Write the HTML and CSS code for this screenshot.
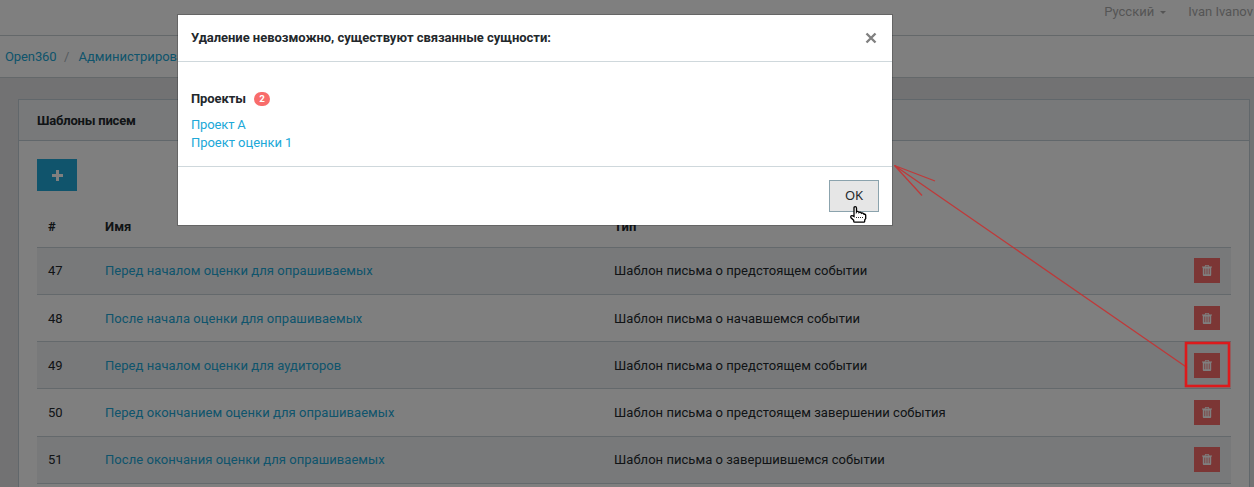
FILE: index.html
```html
<!DOCTYPE html>
<html lang="ru">
<head>
<meta charset="utf-8">
<title>Шаблоны писем</title>
<link rel="stylesheet" href="styles.css">
</head>
<body>
<svg class="defs" width="0" height="0">
  <symbol id="trash" viewBox="0 0 10 11"><path fill="currentColor" fill-rule="evenodd" d="M3.300 0h3.400l.7 1.400H10v1H9.200V10q0 1-1 1H1.800q-1 0-1-1V2.400H0v-1h2.600zM3.800.8l-.3.6h3l-.3-.6zM2.400 3.500v5.800h.8V3.500zM4.600 3.500v5.800h.8V3.500zM6.800 3.500v5.800h.8V3.500z"/></symbol>
</svg>
<header class="topbar"><span class="lang">Русский<i class="caret"></i></span><span>Ivan Ivanov</span></header>
<nav class="breadcrumb"><a>Open360</a><span class="sep">/</span><a class="section">Администрирование</a></nav>
<main class="main">
  <section class="card">
    <h1 class="card-header">Шаблоны писем</h1>
    <div class="card-body">
      <button class="btn-add"><svg width="11" height="11" viewBox="0 0 11 11"><path fill="currentColor" d="M4.500 0h2.500v4h4v3H7v4H4V7H0V4h4V0z"/></svg></button>
      <div class="table">
        <div class="row head"><span>#</span><span>Имя</span><span>Тип</span></div>
        <div class="row odd"><span>47</span><a>Перед началом оценки для опрашиваемых</a><span>Шаблон письма о предстоящем событии</span><button class="btn-del"><svg width="10" height="11"><use href="#trash"/></svg></button></div>
        <div class="row low"><span>48</span><a>После начала оценки для опрашиваемых</a><span>Шаблон письма о начавшемся событии</span><button class="btn-del short"><svg width="10" height="11"><use href="#trash"/></svg></button></div>
        <div class="row odd low"><span>49</span><a>Перед началом оценки для аудиторов</a><span>Шаблон письма о предстоящем событии</span><button class="btn-del"><svg width="10" height="11"><use href="#trash"/></svg></button></div>
        <div class="row low tall"><span>50</span><a>Перед окончанием оценки для опрашиваемых</a><span>Шаблон письма о предстоящем завершении события</span><button class="btn-del"><svg width="10" height="11"><use href="#trash"/></svg></button></div>
        <div class="row odd"><span>51</span><a>После окончания оценки для опрашиваемых</a><span>Шаблон письма о завершившемся событии</span><button class="btn-del"><svg width="10" height="11"><use href="#trash"/></svg></button></div>
        <div class="row last"></div>
      </div>
    </div>
  </section>
</main>
<div class="backdrop">
  <div class="modal">
    <div class="modal-header"><b>Удаление невозможно, существуют связанные сущности:</b><svg class="close" width="12" height="12" viewBox="0 0 12 12"><path d="M1.500 1.500l9 9M10.500 1.500l-9 9" stroke="#808080" stroke-width="2.400"/></svg></div>
    <div class="modal-body">
      <div class="group"><b>Проекты</b><span class="badge">2</span></div>
      <a class="tight">Проект А</a>
      <a>Проект оценки 1</a>
    </div>
    <div class="modal-footer"><button class="btn-ok">OK</button></div>
  </div>
</div>
<svg class="annotation" width="1254" height="487" viewBox="0 0 1254 487" fill="none">
  <path d="M1187 367.500L894.500 165.500M935 181L894.500 165.500L922 195.500" stroke="#d02828" stroke-opacity=".8" stroke-width="1.300"/>
  <rect x="1186" y="343" width="43" height="43" stroke="#dc1a1c" stroke-width="2.600"/>
</svg>
<svg class="cursor" width="17" height="17" viewBox="0 0 17 17"><path d="M4 10.500V2q0-1.300 1.200-1.300T6.500 2v4q.5-.8 1.500-.5t1 1q.8-.6 1.600-.2t.9 1q1-.6 1.700 0 .8.3.9 1 1.400-.3 1.600 1v3.200l-1 1.500v1.300q0 .9-1 .9H4.700q-1 0-1-.9v-1L1 11.800q-.6-1.500.3-2T4 10.500z" fill="#fff" stroke="#000" stroke-width="1.300"/><path d="M6 11.500h7" stroke="#333" stroke-dasharray="1 1"/></svg>
</body>
</html>
```
FILE: styles.css
```css
* { box-sizing: border-box; }
body { margin: 0; height: 487px; overflow: hidden; background: #e4e5e6; color: #23282c; font: 13px/18px Roboto, sans-serif; }
a { color: #20a8d8; }
b, h1 { font-weight: 700; }
button { border: 0; padding: 0; display: flex; align-items: center; justify-content: center; font: inherit; }
.defs { display: block; position: absolute; }
.topbar { height: 36px; padding: 3px 1px 0 0; background: #fff; border-bottom: 1px solid #c8d0d4; display: flex; justify-content: flex-end; gap: 22px; color: #ababab; }
.lang { display: flex; align-items: center; height: 18px; gap: 6px; }
.caret { border: 3px solid transparent; border-top-color: currentColor; border-bottom: 0; }
.breadcrumb { height: 42px; padding: 12px 5px 0; background: #fff; border-bottom: 1px solid #c8d0d4; display: flex; letter-spacing: -.1px; }
.section { letter-spacing: 0; }
.sep { width: 22px; padding-right: 2px; text-align: center; color: #acb4bc; }
.main { height: 409px; padding: 21px 4px 0 18px; }
.card { background: #fff; border: 1px solid #c2cfd6; border-bottom: 0; height: 388px; }
.card-header { margin: 0; height: 41px; padding: 12px 18px 0; background: #f0f3f5; border-bottom: 1px solid #c2cfd6; font-size: 13px; line-height: 18px; letter-spacing: -.2px; }
.card-body { padding: 18px 18px 0; }
.btn-add { width: 40px; height: 32px; background: #20a8d8; color: #fff; }
.table { margin-top: 16px; }
.row { height: 47px; padding: 10px 0 0 11px; border-top: 1px solid #c8d3d8; display: grid; grid-template-columns: 57px 509px 580px 26px; align-items: start; }
.row span, .row a { margin-top: 4px; letter-spacing: .04px; }
.row a { letter-spacing: .05px; }
.row.head { height: 40px; padding-top: 7px; border: 0; font-weight: 700; }
.row.low { padding-top: 11px; }
.row.tall { height: 48px; }
.row.last { height: 4px; padding: 0; }
.odd { background: #f0f3f5; }
.btn-del { width: 26px; height: 25px; background: #f86c6b; color: #fff; }
.btn-del.short { height: 24px; }
.backdrop { position: absolute; inset: 0; background: rgba(0,0,0,.5); }
.modal { width: 716px; height: 212px; margin: 14px 0 0 177px; background: #fff; background-clip: padding-box; border: 1px solid rgba(0,0,0,.2); }
.modal-header { height: 47px; padding: 0 15px 0 13px; border-bottom: 1px solid #cfd8dc; display: flex; align-items: center; justify-content: space-between; letter-spacing: -.04px; }
.modal-body { height: 105px; padding: 28px 13px 0; border-bottom: 1px solid #cfd8dc; display: flex; flex-direction: column; letter-spacing: -.04px; }
.tight { letter-spacing: -.15px; }
.group { display: flex; align-items: center; gap: 8px; height: 18px; margin-bottom: 8px; letter-spacing: -.08px; }
.badge { width: 16px; height: 14px; border-radius: 8px; background: #f86c6b; color: #fff; font-size: 9.750px; font-weight: 700; line-height: 14px; text-align: center; }
.modal-footer { padding: 13px; display: flex; justify-content: flex-end; }
.btn-ok { width: 50px; height: 32px; padding-bottom: 2px; background: #e6e6e6; border: 1px solid #8ba3ad; color: #23282c; font-family: "Noto Sans", sans-serif; }
.annotation { position: absolute; left: 0; top: 0; }
.cursor { position: absolute; left: 850px; top: 206px; }
```
